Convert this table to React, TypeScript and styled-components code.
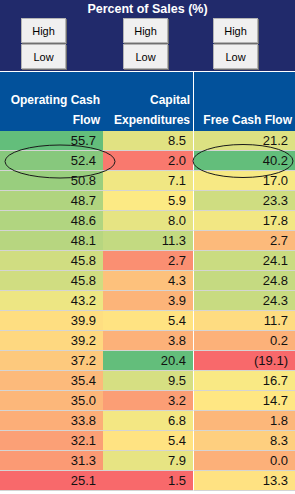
import styled, { createGlobalStyle } from 'styled-components';

const GlobalStyle = createGlobalStyle`
  body {
    margin: 0;
    background: #ffffff;
    font-family: 'Liberation Sans', Arial, sans-serif;
  }
`;

const ocf = [55.7, 52.4, 50.8, 48.7, 48.6, 48.1, 45.8, 45.8, 43.2, 39.9, 39.2, 37.2, 35.4, 35.0, 33.8, 32.1, 31.3, 25.1];
const capex = [8.5, 2.0, 7.1, 5.9, 8.0, 11.3, 2.7, 4.3, 3.9, 5.4, 3.8, 20.4, 9.5, 3.2, 6.8, 5.4, 7.9, 1.5];
const fcf = [21.2, 40.2, 17.0, 23.3, 17.8, 2.7, 24.1, 24.8, 24.3, 11.7, 0.2, -19.1, 16.7, 14.7, 1.8, 8.3, 0.0, 13.3];

// excel-style 3 colour scale: min red, median yellow, max green
const RED = [248, 105, 107];
const YELLOW = [255, 235, 132];
const GREEN = [99, 190, 123];

function mix(a: number[], b: number[], t: number) {
  const c = a.map((x, i) => Math.round(x + (b[i] - x) * t));
  return `rgb(${c[0]}, ${c[1]}, ${c[2]})`;
}

function scale(values: number[]) {
  const sorted = [...values].sort((a, b) => a - b);
  const min = sorted[0];
  const max = sorted[sorted.length - 1];
  const pos = (sorted.length - 1) * 0.5;
  const lo = Math.floor(pos);
  const mid = sorted[lo] + (sorted[Math.ceil(pos)] - sorted[lo]) * (pos - lo);
  return values.map((v) =>
    v <= mid ? mix(RED, YELLOW, (v - min) / (mid - min)) : mix(YELLOW, GREEN, (v - mid) / (max - mid))
  );
}

const fmt = (v: number) => (v < 0 ? `(${Math.abs(v).toFixed(1)})` : v.toFixed(1));

const columns = [ocf, capex, fcf];
const colours = columns.map(scale);

export default function App() {
  return (
    <>
      <GlobalStyle />
      <Page>
        <TopBar>
          <Title>Percent of Sales (%)</Title>
          <ButtonRow>
            {[21, 57, 45].map((ml, i) => (
              <ButtonGroup key={i} $ml={ml}>
                <SpinButton>High</SpinButton>
                <SpinButton>Low</SpinButton>
              </ButtonGroup>
            ))}
          </ButtonRow>
        </TopBar>
        <Divider />
        <Table>
          <HeadCell>Operating Cash<br />Flow</HeadCell>
          <HeadCell>Capital<br />Expenditures</HeadCell>
          <HeadCell $split>Free Cash Flow</HeadCell>
          {ocf.map((_, r) =>
            columns.map((col, c) => (
              <Cell key={`${r}-${c}`} $bg={colours[c][r]} $split={c === 2}>
                {fmt(col[r])}
              </Cell>
            ))
          )}
        </Table>
        <Marks width="295" height="60" viewBox="0 0 295 60">
          <ellipse cx="60" cy="16.5" rx="55" ry="16.5" />
          <ellipse cx="243" cy="16" rx="50" ry="16.5" />
        </Marks>
      </Page>
    </>
  );
}

const Page = styled.div`
  position: relative;
  width: 295px;
`;

const TopBar = styled.div`
  height: 71px;
  background: #212a6b;
  display: flex;
  flex-direction: column;
  align-items: center;
  box-sizing: border-box;
  padding-top: 2px;
`;

const Title = styled.div`
  color: #ffffff;
  font-weight: bold;
  font-size: 12.5px;
  line-height: 15px;
  height: 16px;
`;

const ButtonRow = styled.div`
  display: flex;
  width: 100%;
`;

const ButtonGroup = styled.div<{ $ml: number }>`
  display: flex;
  flex-direction: column;
  margin-left: ${(p) => p.$ml}px;
`;

const SpinButton = styled.div`
  width: 43px;
  height: 23px;
  background: #f0f0f0;
  border: 1px solid #b4b4b4;
  box-shadow: 1px 1px 0 #6f6f6f;
  color: #000000;
  font-size: 11px;
  display: flex;
  align-items: center;
  justify-content: center;
  margin-bottom: 1px;
`;

const Divider = styled.div`
  height: 1px;
  background: #ffffff;
`;

const Table = styled.div`
  display: grid;
  grid-template-columns: 103px 90px 102px;
`;

const HeadCell = styled.div<{ $split?: boolean }>`
  height: 59px;
  background: #02519b;
  color: #ffffff;
  font-weight: bold;
  font-size: 12px;
  line-height: 20px;
  display: flex;
  align-items: flex-end;
  justify-content: flex-end;
  text-align: right;
  box-sizing: border-box;
  padding: 0 3px 1px 0;
  border-left: ${(p) => (p.$split ? '1px solid #ffffff' : 'none')};
`;

const Cell = styled.div<{ $bg: string; $split?: boolean }>`
  height: 20px;
  box-sizing: border-box;
  background: ${(p) => p.$bg};
  border-bottom: 1px solid #d4d4d4;
  border-left: ${(p) => (p.$split ? '1px solid #ffffff' : 'none')};
  color: #111111;
  font-size: 13px;
  line-height: 20px;
  text-align: right;
  padding-right: 7px;
`;

const Marks = styled.svg`
  position: absolute;
  left: 0;
  top: 145px;
  fill: none;
  stroke: #1a1a1a;
  stroke-width: 1;
  overflow: visible;
`;
